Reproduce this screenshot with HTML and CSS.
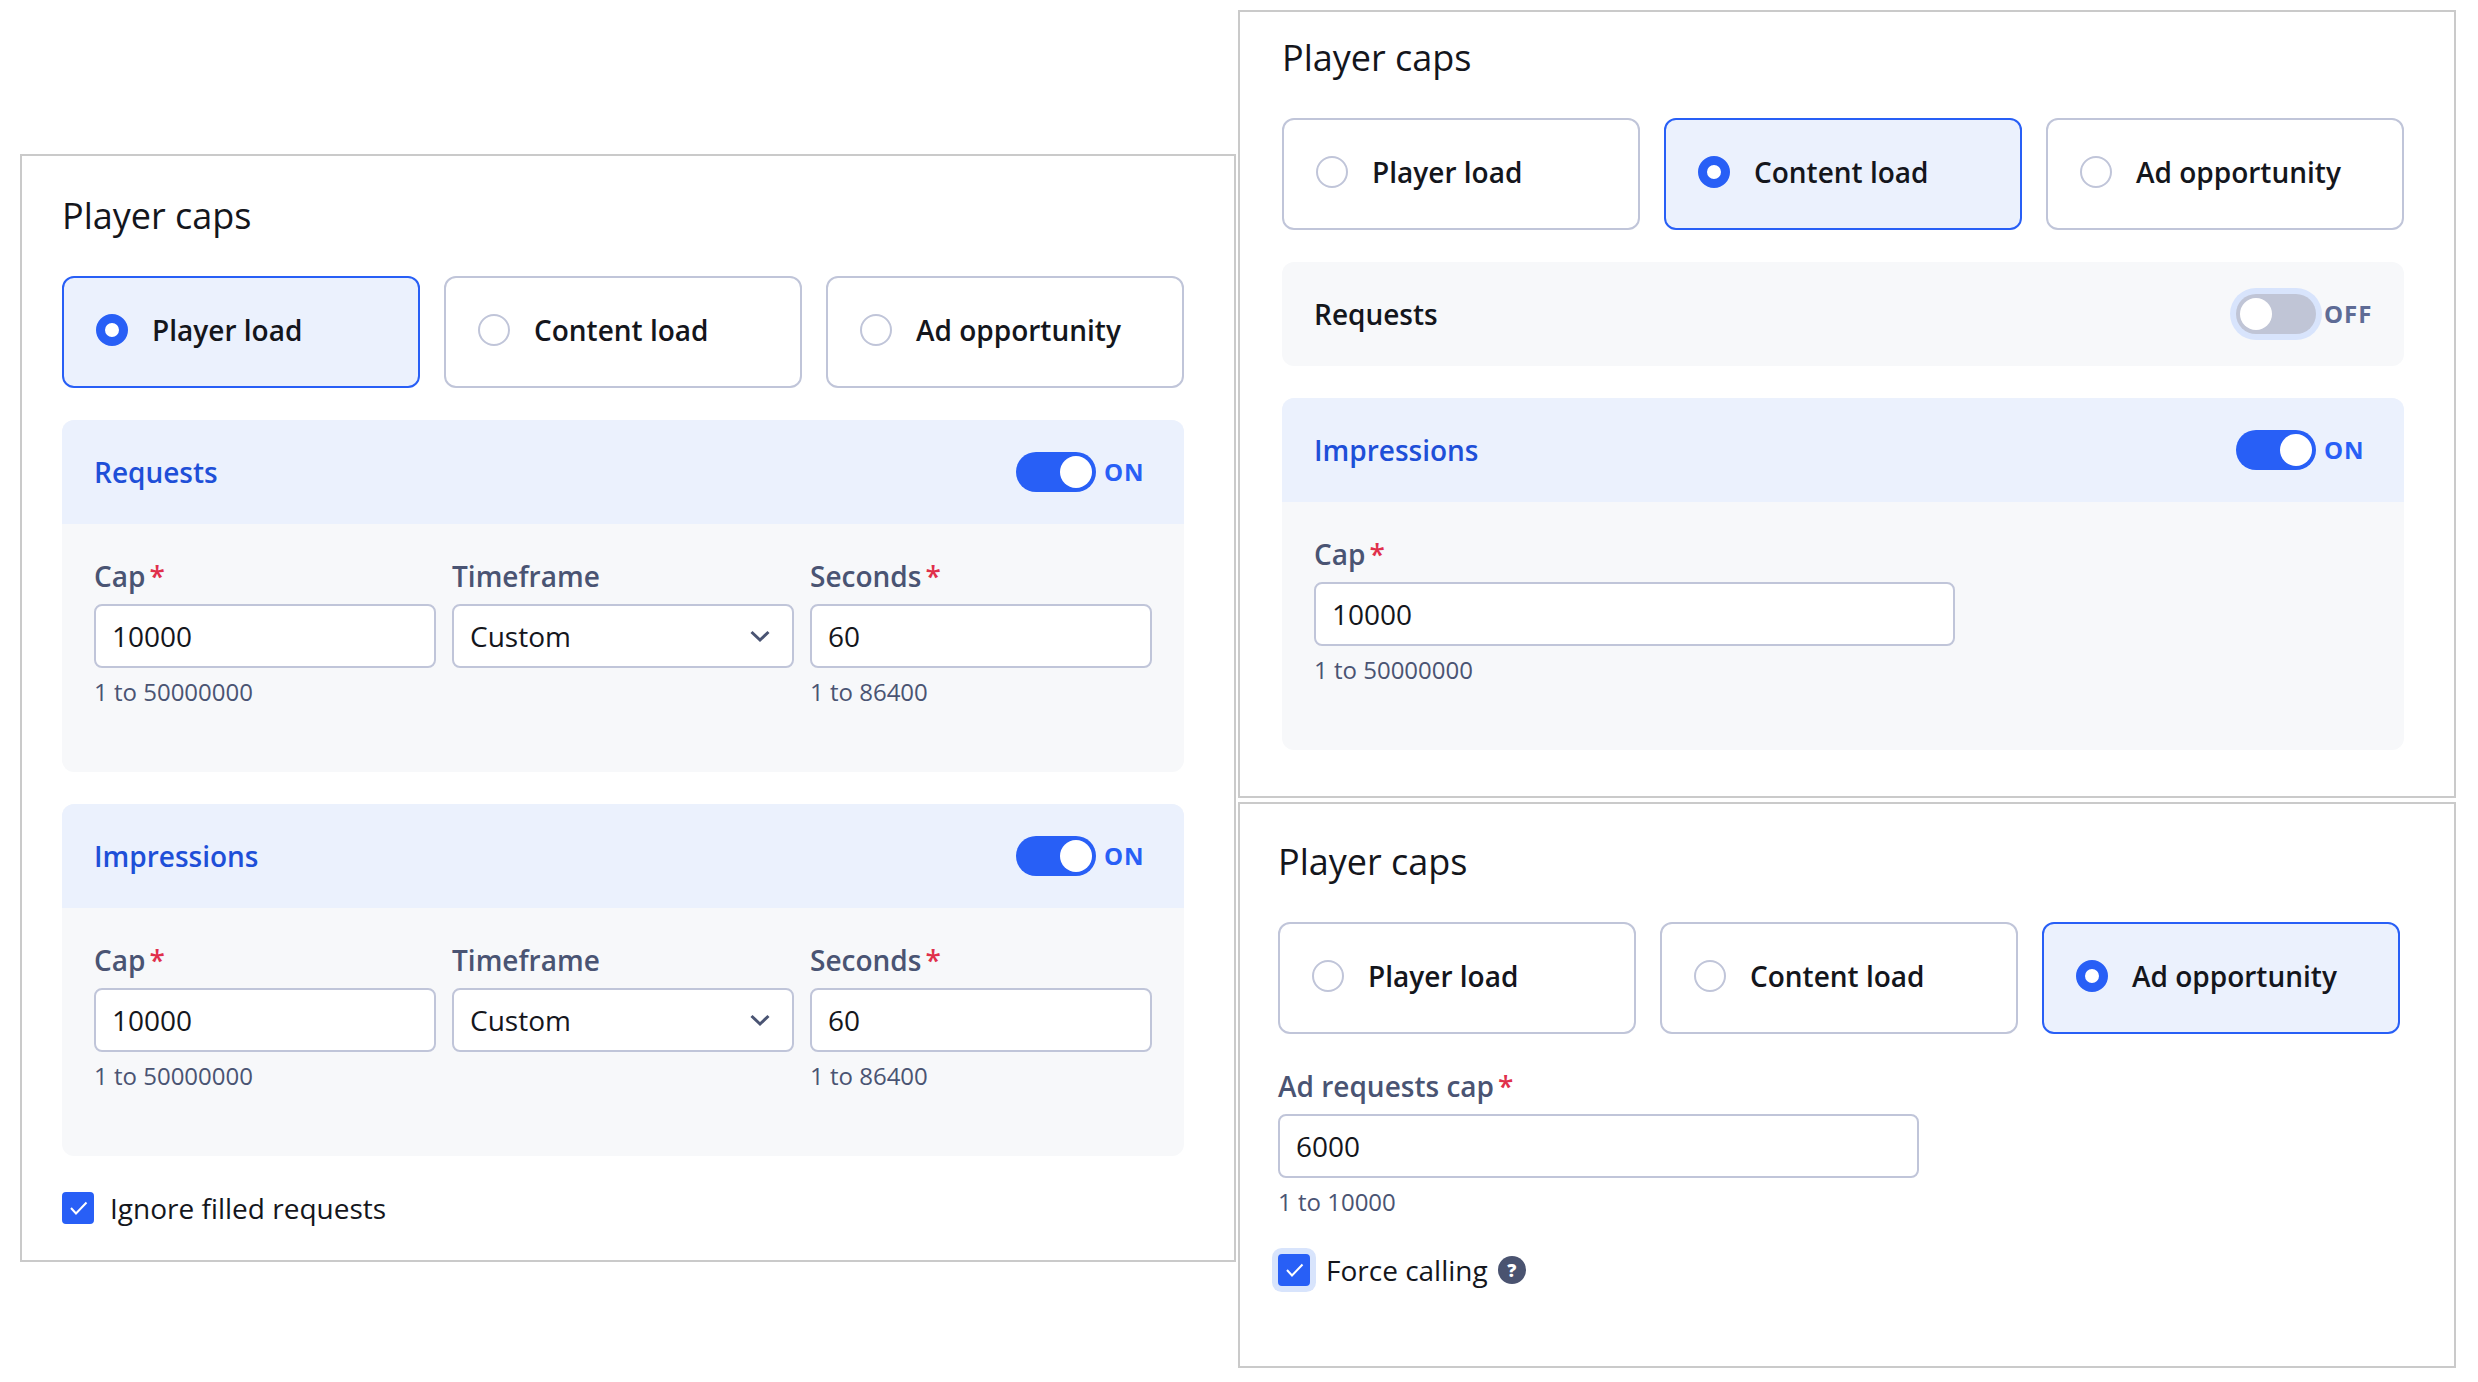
FILE: index.html
```html
<!DOCTYPE html>
<html lang="en">
<head>
    <meta charset="UTF-8">
    <meta name="viewport" content="width=device-width, initial-scale=1.0">
    <title>Player caps</title>
    <link rel="stylesheet" href="styles.css">
</head>
<body>
    <main class="board">
        <div class="column column-left">
            <!-- Player load -->
            <section class="panel panel-player">
                <h2 class="panel-title">Player caps</h2>

                <div class="options" role="radiogroup" aria-label="Player caps">
                    <label class="option"><input type="radio" class="radio" name="caps-1" checked>Player load</label>
                    <label class="option"><input type="radio" class="radio" name="caps-1">Content load</label>
                    <label class="option"><input type="radio" class="radio" name="caps-1">Ad opportunity</label>
                </div>

                <div class="group group-on">
                    <div class="group-header">
                        <h3 class="group-title">Requests</h3>
                        <label class="toggle">
                            <input type="checkbox" class="switch" role="switch" checked>
                            <span class="toggle-text">ON</span>
                        </label>
                    </div>
                    <div class="group-body fields">
                        <div class="field">
                            <label class="field-label" for="req-cap">Cap<span class="required">*</span></label>
                            <input type="text" class="control" id="req-cap" value="10000">
                            <p class="hint">1 to 50000000</p>
                        </div>
                        <div class="field">
                            <label class="field-label" for="req-time">Timeframe</label>
                            <div class="select-wrap">
                                <select class="control" id="req-time">
                                    <option>Custom</option>
                                </select>
                                <svg class="chevron" viewBox="0 0 24 24"><path d="M3.500 8l8.500 8 8.500-8"/></svg>
                            </div>
                        </div>
                        <div class="field">
                            <label class="field-label" for="req-sec">Seconds<span class="required">*</span></label>
                            <input type="text" class="control" id="req-sec" value="60">
                            <p class="hint">1 to 86400</p>
                        </div>
                    </div>
                </div>

                <div class="group group-on">
                    <div class="group-header">
                        <h3 class="group-title">Impressions</h3>
                        <label class="toggle">
                            <input type="checkbox" class="switch" role="switch" checked>
                            <span class="toggle-text">ON</span>
                        </label>
                    </div>
                    <div class="group-body fields">
                        <div class="field">
                            <label class="field-label" for="imp-cap">Cap<span class="required">*</span></label>
                            <input type="text" class="control" id="imp-cap" value="10000">
                            <p class="hint">1 to 50000000</p>
                        </div>
                        <div class="field">
                            <label class="field-label" for="imp-time">Timeframe</label>
                            <div class="select-wrap">
                                <select class="control" id="imp-time">
                                    <option>Custom</option>
                                </select>
                                <svg class="chevron" viewBox="0 0 24 24"><path d="M3.500 8l8.500 8 8.500-8"/></svg>
                            </div>
                        </div>
                        <div class="field">
                            <label class="field-label" for="imp-sec">Seconds<span class="required">*</span></label>
                            <input type="text" class="control" id="imp-sec" value="60">
                            <p class="hint">1 to 86400</p>
                        </div>
                    </div>
                </div>

                <div class="check-row">
                    <label class="check">
                        <span class="check-box">
                            <input type="checkbox" class="checkbox" checked>
                            <svg class="tick" viewBox="0 0 32 32"><path d="M9 16l5 5.500L24.500 10.500"/></svg>
                        </span>
                        Ignore filled requests
                    </label>
                </div>
            </section>
        </div>

        <div class="column column-right">
            <!-- Content load -->
            <section class="panel panel-content">
                <h2 class="panel-title">Player caps</h2>

                <div class="options" role="radiogroup" aria-label="Player caps">
                    <label class="option"><input type="radio" class="radio" name="caps-2">Player load</label>
                    <label class="option"><input type="radio" class="radio" name="caps-2" checked>Content load</label>
                    <label class="option"><input type="radio" class="radio" name="caps-2">Ad opportunity</label>
                </div>

                <div class="group">
                    <div class="group-header">
                        <h3 class="group-title">Requests</h3>
                        <label class="toggle">
                            <input type="checkbox" class="switch focused" role="switch">
                            <span class="toggle-text">OFF</span>
                        </label>
                    </div>
                </div>

                <div class="group group-on">
                    <div class="group-header">
                        <h3 class="group-title">Impressions</h3>
                        <label class="toggle">
                            <input type="checkbox" class="switch" role="switch" checked>
                            <span class="toggle-text">ON</span>
                        </label>
                    </div>
                    <div class="group-body">
                        <div class="field field-wide">
                            <label class="field-label" for="content-cap">Cap<span class="required">*</span></label>
                            <input type="text" class="control" id="content-cap" value="10000">
                            <p class="hint">1 to 50000000</p>
                        </div>
                    </div>
                </div>
            </section>

            <!-- Ad opportunity -->
            <section class="panel panel-ad">
                <h2 class="panel-title">Player caps</h2>

                <div class="options" role="radiogroup" aria-label="Player caps">
                    <label class="option"><input type="radio" class="radio" name="caps-3">Player load</label>
                    <label class="option"><input type="radio" class="radio" name="caps-3">Content load</label>
                    <label class="option"><input type="radio" class="radio" name="caps-3" checked>Ad opportunity</label>
                </div>

                <div class="field field-wide field-single">
                    <label class="field-label" for="ad-cap">Ad requests cap<span class="required">*</span></label>
                    <input type="text" class="control" id="ad-cap" value="6000">
                    <p class="hint">1 to 10000</p>
                </div>

                <div class="check-row">
                    <label class="check">
                        <span class="check-box">
                            <input type="checkbox" class="checkbox focused" checked>
                            <svg class="tick" viewBox="0 0 32 32"><path d="M9 16l5 5.500L24.500 10.500"/></svg>
                        </span>
                        Force calling
                    </label>
                    <button type="button" class="help" aria-label="Help">?</button>
                </div>
            </section>
        </div>
    </main>
</body>
</html>
```
FILE: styles.css
```css
* {
    margin: 0;
    padding: 0;
    box-sizing: border-box;
}

body {
    background-color: #fff;
    color: #14161c;
    font-family: 'Open Sans', sans-serif;
    font-size: 28px;
}

input,
select,
button {
    font: inherit;
    color: inherit;
}

.board {
    display: grid;
    grid-template-columns: calc(50% - 2px) 1fr;
    gap: 2px;
    padding: 10px 22px 14px 20px;
}

.column {
    display: flex;
    flex-direction: column;
    justify-content: center;
    gap: 4px;
    min-width: 0;
}

.column-left {
    padding-top: 38px;
}

/* Panels */
.panel {
    background-color: #fff;
    border: 2px solid #cacaca;
}

.panel-player {
    padding: 34px 50px 36px 40px;
}

.panel-content {
    padding: 20px 50px 46px 42px;
}

.panel-ad {
    padding: 32px 54px 80px 38px;
}

.panel-title {
    font-size: 36px;
    font-weight: 400;
    line-height: 52px;
    margin-bottom: 34px;
}

/* Radio cards */
.options {
    display: grid;
    grid-template-columns: repeat(3, 1fr);
    gap: 24px;
}

.option {
    display: flex;
    align-items: center;
    gap: 24px;
    padding: 36px 32px 40px;
    border: 2px solid #c0c5d9;
    border-radius: 12px;
    font-weight: 600;
    line-height: 32px;
    white-space: nowrap;
    cursor: pointer;
}

.option:has(:checked) {
    background-color: #ebf1fd;
    border-color: #285ff6;
}

.radio {
    appearance: none;
    flex-shrink: 0;
    width: 32px;
    height: 32px;
    background-color: #fff;
    border: 2px solid #c0c5d9;
    border-radius: 50%;
}

.radio:checked {
    border: 9px solid #285ff6;
}

/* Groups */
.group {
    margin-top: 32px;
    background-color: #f7f8fa;
    border-radius: 12px;
    overflow: hidden;
}

.group-header {
    display: flex;
    align-items: center;
    justify-content: space-between;
    padding: 32px;
}

.group-title {
    font-size: 28px;
    font-weight: 600;
    line-height: 40px;
}

.group-on .group-header {
    background-color: #ebf1fd;
}

.group-on .group-title {
    color: #1e4fd8;
}

.group-body {
    padding: 32px 32px 64px;
}

/* Toggle */
.toggle {
    display: flex;
    align-items: center;
    gap: 8px;
    cursor: pointer;
}

.switch {
    appearance: none;
    display: flex;
    width: 80px;
    height: 40px;
    padding: 4px;
    background-color: #c0c5d6;
    border-radius: 20px;
}

.switch::before {
    content: '';
    width: 32px;
    height: 32px;
    background-color: #fff;
    border-radius: 50%;
}

.switch:checked {
    justify-content: flex-end;
    background-color: #285ff6;
}

.toggle-text {
    width: 48px;
    color: #5e6b95;
    font-size: 24px;
    font-weight: 700;
    letter-spacing: 1px;
    line-height: 40px;
}

.group-on .toggle-text {
    color: #285ff6;
}

.focused {
    box-shadow: 0 0 0 6px #d8e4fc;
}

/* Fields */
.fields {
    display: grid;
    grid-template-columns: repeat(3, 1fr);
    gap: 16px;
}

.field-wide {
    max-width: 641px;
}

.field-single {
    margin-top: 32px;
}

.field-label {
    display: block;
    margin-bottom: 8px;
    color: #4a5473;
    font-weight: 600;
    line-height: 40px;
}

.required {
    margin-left: 4px;
    color: #e0304b;
}

.control {
    display: block;
    width: 100%;
    height: 64px;
    padding: 0 16px;
    background-color: #fff;
    border: 2px solid #c0c5d9;
    border-radius: 8px;
    appearance: none;
}

.select-wrap {
    position: relative;
}

.chevron {
    position: absolute;
    top: 20px;
    right: 22px;
    width: 24px;
    height: 24px;
    fill: none;
    stroke: #4a5473;
    stroke-width: 3;
    pointer-events: none;
}

.hint {
    margin-top: 8px;
    color: #4a5473;
    font-size: 24px;
    line-height: 32px;
}

/* Checkboxes */
.check-row {
    display: flex;
    align-items: center;
    gap: 10px;
    margin-top: 36px;
}

.check {
    display: flex;
    align-items: center;
    gap: 16px;
    line-height: 32px;
    cursor: pointer;
}

.check-box {
    position: relative;
    width: 32px;
    height: 32px;
}

.checkbox {
    appearance: none;
    display: block;
    width: 32px;
    height: 32px;
    border: 2px solid #c0c5d9;
    border-radius: 4px;
}

.checkbox:checked {
    background-color: #285ff6;
    border-color: #285ff6;
}

.tick {
    position: absolute;
    inset: 0;
    fill: none;
    stroke: #fff;
    stroke-width: 2;
    pointer-events: none;
}

.help {
    width: 28px;
    height: 28px;
    background-color: #4a5370;
    border: none;
    border-radius: 50%;
    color: #fff;
    font-size: 18px;
    font-weight: 800;
    line-height: 28px;
    text-align: center;
}
```
